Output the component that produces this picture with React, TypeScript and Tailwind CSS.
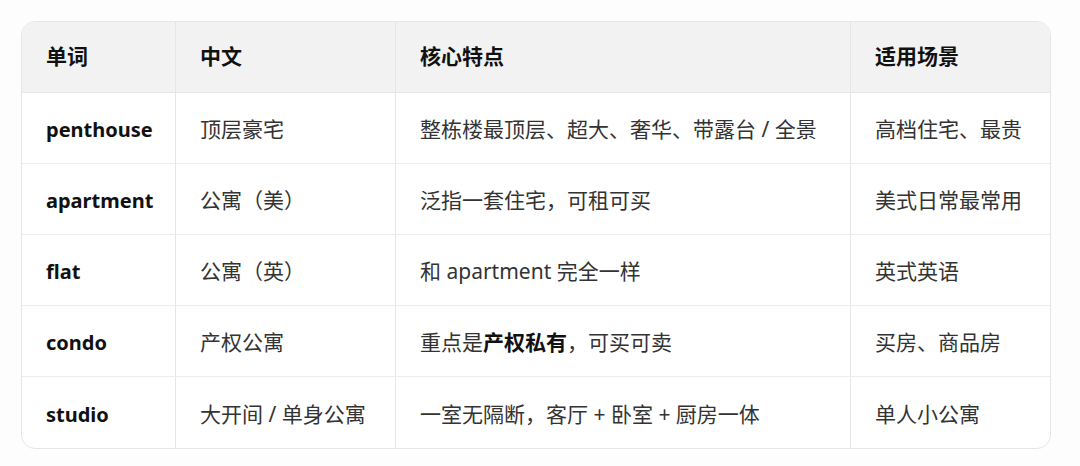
import React from 'react'

interface Row {
  word: string
  zh: string
  feature: React.ReactNode
  usage: string
}

const rows: Row[] = [
  { word: 'penthouse', zh: '顶层豪宅', feature: '整栋楼最顶层、超大、奢华、带露台 / 全景', usage: '高档住宅、最贵' },
  { word: 'apartment', zh: '公寓（美）', feature: '泛指一套住宅，可租可买', usage: '美式日常最常用' },
  { word: 'flat', zh: '公寓（英）', feature: '和 apartment 完全一样', usage: '英式英语' },
  {
    word: 'condo',
    zh: '产权公寓',
    feature: (
      <>
        重点是<span className="font-bold text-[#111]">产权私有</span>，可买可卖
      </>
    ),
    usage: '买房、商品房',
  },
  { word: 'studio', zh: '大开间 / 单身公寓', feature: '一室无隔断，客厅 + 卧室 + 厨房一体', usage: '单人小公寓' },
]

const headers = ['单词', '中文', '核心特点', '适用场景']

export default function App() {
  return (
    <div
      className="w-[1080px] h-[466px] bg-[#fdfdfd] pt-[21px] pl-[21px]"
      style={{ fontFamily: '"Noto Sans", "Noto Sans CJK SC", sans-serif' }}
    >
      <div className="w-[1030px] border border-[#e6e6e6] rounded-[14px] overflow-hidden bg-white">
        {/* header */}
        <div className="grid grid-cols-[154px_220px_455px_1fr] h-[71px] bg-[#f2f2f2] border-b border-[#e6e6e6]">
          {headers.map((h, i) => (
            <div
              key={h}
              className={`flex items-center px-6 text-[21px] font-bold text-[#111] ${i < 3 ? 'border-r border-[#e6e6e6]' : ''}`}
            >
              {h}
            </div>
          ))}
        </div>

        {rows.map((r, idx) => (
          <div
            key={r.word}
            className={`grid grid-cols-[154px_220px_455px_1fr] h-[71px] text-[21px] text-[#333] ${idx < rows.length - 1 ? 'border-b border-[#ececec]' : 'h-[70px]'}`}
          >
            <div className="flex items-center px-6 pt-1 text-[20px] font-bold text-[#111] border-r border-[#e6e6e6]">{r.word}</div>
            <div className="flex items-center px-6 pt-1 border-r border-[#e6e6e6] whitespace-nowrap">{r.zh}</div>
            <div className="flex items-center px-6 pt-1 border-r border-[#e6e6e6] whitespace-nowrap">{r.feature}</div>
            <div className="flex items-center px-6 pt-1 whitespace-nowrap">{r.usage}</div>
          </div>
        ))}
      </div>
    </div>
  )
}
